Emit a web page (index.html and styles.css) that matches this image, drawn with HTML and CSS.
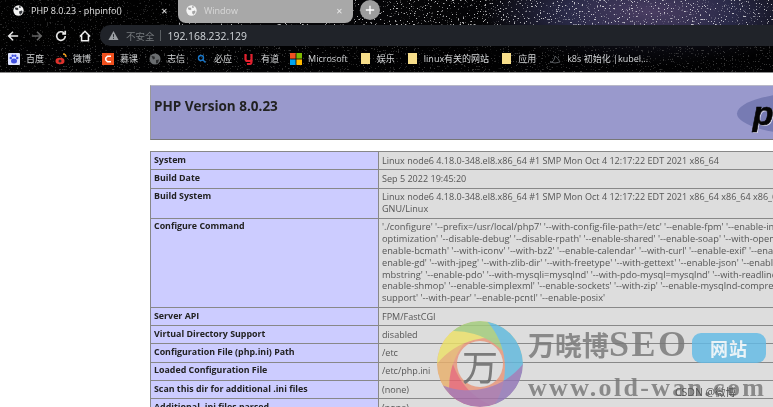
FILE: index.html
```html
<!DOCTYPE html>
<html lang="zh">
<head>
<meta charset="utf-8">
<title>PHP 8.0.23 - phpinfo()</title>
<link rel="stylesheet" href="styles.css">
</head>
<body>
<header class="chrome">
  <svg class="stars" width="773" height="72" aria-hidden="true">
    <defs>
      <filter id="starfield" x="0" y="0" width="100%" height="100%">
        <feTurbulence type="fractalNoise" baseFrequency="0.62" numOctaves="2" seed="11"/>
        <feColorMatrix type="matrix" values="0 0 0 0 1  0 0 0 0 1  0 0 0 0 1  11 0 0 0 -7.100"/>
      </filter>
    </defs>
    <rect width="773" height="72" filter="url(#starfield)"/>
  </svg>
  <div class="tabs">
    <div class="tab tab-active">
      <svg class="globe" viewBox="0 0 16 16"><circle cx="8" cy="8" r="7.5" fill="#f4f4f4"/><path d="M3 3.5l4 .5 1 2-2 1.5L3 6zM9 9l4-1 1 2-3 4-2-2zM9 1.5l3 1-1.5 2-2-1z" fill="#33363a"/></svg>
      <span class="tab-title">PHP 8.0.23 - phpinfo()</span>
      <span class="tab-x">✕</span>
    </div>
    <div class="tab tab-inactive">
      <svg class="globe" viewBox="0 0 16 16"><circle cx="8" cy="8" r="7.5" fill="#f4f4f4"/><path d="M3 3.5l4 .5 1 2-2 1.5L3 6zM9 9l4-1 1 2-3 4-2-2zM9 1.5l3 1-1.5 2-2-1z" fill="#a4a4a4"/></svg>
      <span class="tab-title">Window</span>
      <span class="tab-x">✕</span>
    </div>
    <div class="newtab"><svg viewBox="0 0 12 12"><path d="M6 1v10M1 6h10" stroke="#fff" stroke-width="1.6"/></svg></div>
  </div>
  <div class="toolbar">
    <svg class="nav" viewBox="0 0 14 14"><path d="M13 7H2M7 2L2 7l5 5" fill="none" stroke="#e8e8e8" stroke-width="1.8"/></svg>
    <svg class="nav" viewBox="0 0 14 14"><path d="M1 7h11M7 2l5 5-5 5" fill="none" stroke="#666" stroke-width="1.8"/></svg>
    <svg class="nav" viewBox="0 0 14 14"><path d="M12 7a5 5 0 1 1-1.500-3.500M12 1v3.500H8.500" fill="none" stroke="#e8e8e8" stroke-width="1.900"/></svg>
    <svg class="nav" viewBox="0 0 14 14"><path d="M1 7.500l6-6 6 6M3 6v6.500h8V6" fill="none" stroke="#eee" stroke-width="1.800"/></svg>
    <div class="omnibox">
      <svg class="warn" viewBox="0 0 12 12"><path d="M6 1l5.500 10H.5z" fill="#9a9ea2"/><path d="M6 4.500v3M6 8.500v1.200" stroke="#202428"/></svg>
      <span class="insecure">不安全</span>
      <span class="sep"></span>
      <span class="url">192.168.232.129</span>
    </div>
  </div>
  <nav class="bookmarks">
    <a class="bm"><svg viewBox="0 0 12 12"><rect width="12" height="12" rx="1" fill="#dfe4ff"/><ellipse cx="6" cy="8" rx="3" ry="2.500" fill="#4050e0"/><circle cx="2.800" cy="5" r="1.300" fill="#4050e0"/><circle cx="9.200" cy="5" r="1.300" fill="#4050e0"/><circle cx="4.700" cy="2.800" r="1.200" fill="#4050e0"/><circle cx="7.300" cy="2.800" r="1.200" fill="#4050e0"/></svg>百度</a>
    <a class="bm"><svg viewBox="0 0 12 12"><ellipse cx="5" cy="8" rx="4.500" ry="3.200" fill="#e0322c"/><circle cx="5" cy="8" r="1.500" fill="#222"/><path d="M8 1a3 3 0 0 1 3 3" fill="none" stroke="#f2a020" stroke-width="1.300"/></svg>微博</a>
    <a class="bm"><svg viewBox="0 0 12 12"><rect width="12" height="12" fill="#f0501e"/><path d="M9 3.200H5.500L3.800 5v2l1.700 1.800H9" fill="none" stroke="#fff" stroke-width="1.500"/></svg>慕课</a>
    <a class="bm"><svg viewBox="0 0 12 12"><circle cx="6" cy="6" r="5.500" fill="#6a6d70"/><path d="M2.500 3l3 .5.500 2-2 1zM7 7l3-.5-1 3.500-2 .5z" fill="#2a2b2d"/></svg>志信</a>
    <a class="bm"><svg viewBox="0 0 12 12"><circle cx="5" cy="5" r="2.500" fill="none" stroke="#1976c8" stroke-width="1.400"/><path d="M7 7L9.500 9.500" stroke="#1976c8" stroke-width="1.400"/></svg>必应</a>
    <a class="bm"><svg viewBox="0 0 12 12"><path d="M2.500 1v5q0 2 2 2h4V1M8.500 1v8q0 2-2 2H4" fill="none" stroke="#e3202e" stroke-width="2.200"/></svg>有道</a>
    <a class="bm bm-ms"><svg viewBox="0 0 12 12"><rect width="5.600" height="5.600" fill="#f25022"/><rect x="6.400" width="5.600" height="5.600" fill="#7fba00"/><rect y="6.400" width="5.600" height="5.600" fill="#00a4ef"/><rect x="6.400" y="6.400" width="5.600" height="5.600" fill="#ffb900"/></svg>Microsoft</a>
    <a class="bm bm-folder"><svg viewBox="0 0 9 11"><rect width="9" height="11" fill="#f7de8a"/></svg>娱乐</a>
    <a class="bm bm-folder"><svg viewBox="0 0 9 11"><rect width="9" height="11" fill="#f7de8a"/></svg>linux有关的网站</a>
    <a class="bm bm-folder"><svg viewBox="0 0 9 11"><rect width="9" height="11" fill="#f7de8a"/></svg>应用</a>
    <a class="bm"><svg viewBox="0 0 12 12"><path d="M1 9q4 1 5-6 3 2 5 6-5 2-10 0z" fill="none" stroke="#55585c"/></svg>k8s 初始化 |kubel...</a>
  </nav>
</header>
<main class="page">
  <div class="phpinfo">
    <div class="hero">
      <h1 class="hero-title">PHP Version 8.0.23</h1>
      <div class="php-logo"><span class="php-logo-text">php</span></div>
    </div>
    <table class="info">
      <tr><td class="k">System</td><td class="v">Linux node6 4.18.0-348.el8.x86_64 #1 SMP Mon Oct 4 12:17:22 EDT 2021 x86_64</td></tr>
      <tr><td class="k">Build Date</td><td class="v">Sep 5 2022 19:45:20</td></tr>
      <tr><td class="k">Build System</td><td class="v">Linux node6 4.18.0-348.el8.x86_64 #1 SMP Mon Oct 4 12:17:22 EDT 2021 x86_64 x86_64 x86_64<br>GNU/Linux</td></tr>
      <tr><td class="k">Configure Command</td><td class="v v-cmd">'./configure' '--prefix=/usr/local/php7' '--with-config-file-path=/etc' '--enable-fpm' '--enable-inline-<br>optimization' '--disable-debug' '--disable-rpath' '--enable-shared' '--enable-soap' '--with-openssl' '--<br>enable-bcmath' '--with-iconv' '--with-bz2' '--enable-calendar' '--with-curl' '--enable-exif' '--enable-ftp' '--<br>enable-gd' '--with-jpeg' '--with-zlib-dir' '--with-freetype' '--with-gettext' '--enable-json' '--enable-<br>mbstring' '--enable-pdo' '--with-mysqli=mysqlnd' '--with-pdo-mysql=mysqlnd' '--with-readline' '--<br>enable-shmop' '--enable-simplexml' '--enable-sockets' '--with-zip' '--enable-mysqlnd-compression-<br>support' '--with-pear' '--enable-pcntl' '--enable-posix'</td></tr>
      <tr><td class="k">Server API</td><td class="v">FPM/FastCGI</td></tr>
      <tr><td class="k">Virtual Directory Support</td><td class="v">disabled</td></tr>
      <tr><td class="k">Configuration File (php.ini) Path</td><td class="v">/etc</td></tr>
      <tr><td class="k">Loaded Configuration File</td><td class="v">/etc/php.ini</td></tr>
      <tr><td class="k">Scan this dir for additional .ini files</td><td class="v">(none)</td></tr>
      <tr><td class="k">Additional .ini files parsed</td><td class="v">(none)</td></tr>
    </table>
  </div>
</main>
<aside class="watermark">
  <svg class="wm-logo" viewBox="0 0 86 86">
    <defs>
      <mask id="ring"><circle cx="43" cy="43" r="43" fill="#fff"/><circle cx="43" cy="43" r="23" fill="#000"/></mask>
      <path id="blade" d="M43 0A43 43 0 0 1 64.500 80.200A70 70 0 0 0 43 0z"/>
    </defs>
    <g mask="url(#ring)">
      <circle cx="43" cy="43" r="43" fill="#e8967a"/>
      <use href="#blade" transform="rotate(165 43 43)" fill="#e8606e" opacity=".95"/>
      <use href="#blade" transform="rotate(225 43 43)" fill="#e9b46c" opacity=".95"/>
      <use href="#blade" transform="rotate(-90 43 43)" fill="#ece468" opacity=".95"/>
      <use href="#blade" transform="rotate(-40 43 43)" fill="#9fcb7c" opacity=".95"/>
      <use href="#blade" transform="rotate(10 43 43)" fill="#5db8e4" opacity=".95"/>
      <use href="#blade" transform="rotate(90 43 43)" fill="#9a6bb0" opacity=".85"/>
    </g>
  </svg>
  <span class="wm-wan">万</span>
  <span class="wm-name">万晓博<span class="wm-seo">SEO</span></span>
  <span class="wm-badge">网站</span>
  <span class="wm-url">www.old-wan.com</span>
  <span class="wm-csdn">CSDN @微博</span>
</aside>
</body>
</html>
```
FILE: styles.css
```css
* { box-sizing: border-box; }
html, body { margin: 0; height: 100%; }
body {
  width: 773px;
  height: 407px;
  overflow: hidden;
  position: relative;
  background: #fff;
  font-family: "Open Sans", "Noto Sans CJK SC", sans-serif;
  filter: blur(0.35px);
}
.chrome {
  position: relative;
  height: 73px;
  color: #d4d6d8;
  border-bottom: 1px solid #8a8a8a;
  background-color: #050507;
  background-image: radial-gradient(ellipse 170px 55px at 650px 12px, #4a3d62 0%, #2a2a48 50%, transparent 100%);
}
.stars { position: absolute; left: 0; top: 0; opacity: .7; }
.tabs, .toolbar, .bookmarks { position: relative; }
.tabs { height: 25px; display: flex; align-items: flex-start; }
.tab {
  width: 178px;
  height: 23px;
  display: flex;
  align-items: center;
  gap: 7px;
  padding: 0 10px 2px 13px;
  font-size: 9px;
  color: #e4e4e4;
}
.tab-active { height: 25px; background: #000000c4; padding-bottom: 4px; }
.tab-inactive {
  background: #a8a8a8;
  border-radius: 0 0 8px 8px;
  color: #d8d8d8;
  width: 175px;
  padding-left: 8px;
}
.globe { width: 11px; height: 11px; flex: none; }
.tab-title { flex: 1; white-space: nowrap; }
.tab-x { font-size: 8px; color: #e8e8e8; }
.newtab {
  width: 20px;
  height: 20px;
  margin: 0 0 0 7px;
  border-radius: 50%;
  background: #9d9d9d;
  display: flex;
  align-items: center;
  justify-content: center;
}
.newtab svg { width: 10px; height: 10px; }
.toolbar { height: 21px; display: flex; align-items: center; padding-left: 7px; background: #000000c4; }
.nav { width: 12px; height: 12px; margin-right: 12px; flex: none; }
.nav:nth-child(4) { margin-right: 9px; }
.omnibox {
  flex: 1;
  height: 21px;
  background: #202329;
  border-radius: 10px 0 0 10px;
  display: flex;
  align-items: center;
  padding-left: 8px;
}
.warn { width: 11px; height: 11px; }
.insecure { font-size: 9.5px; color: #75797d; margin-left: 7px; }
.sep { width: 1px; height: 11px; background: #5a5e62; margin: 0 7px 0 5px; }
.url { font-size: 10.400px; color: #d2d6da; }
.bookmarks { height: 26px; display: flex; align-items: center; padding: 0 0 1px 8px; font-size: 9px; background: #000000b0; }
.bm { display: flex; align-items: center; gap: 6px; margin-right: 11px; white-space: nowrap; }
.bm svg { width: 12px; height: 12px; flex: none; }
.bm-ms { margin-right: 13px; }
.bm-folder { gap: 7px; margin-right: 13px; }
.bm-folder svg { width: 9px; height: 11px; }
.page { padding: 12px 0 0 150px; }
.phpinfo { width: 760px; }
.hero {
  height: 55px;
  background: #9999cc;
  border: 1px solid #999;
  border-top-color: #b8b8c8;
  border-bottom-color: #777;
  display: flex;
  justify-content: space-between;
  align-items: flex-start;
  padding: 5px 0 0 3px;
  overflow: hidden;
}
.hero-title { margin: 7px 0 0; font-size: 13.500px; line-height: 16px; font-weight: 700; color: #222; }
.php-logo {
  width: 172px;
  height: 45px;
  border-radius: 50%;
  background: #777bb3;
  display: flex;
  align-items: center;
  justify-content: center;
}
.php-logo-text {
  font: italic 700 34px/34px "Liberation Sans", sans-serif;
  color: #050505;
  -webkit-text-stroke: .6px #050505;
  text-shadow: 1px 1px 0 #d8d8ec;
  margin: 0 78px 2px 0;
}
.info {
  width: 100%;
  margin-top: 11px;
  border-collapse: collapse;
  table-layout: fixed;
  font-size: 9.050px;
  line-height: 11.800px;
  color: #222;
}
.info td { border: 1px solid #888; padding: 2.750px 3px; vertical-align: top; white-space: nowrap; }
.k { width: 228px; background: #ccccff; font-size: 8.850px; font-weight: 700; }
.v { background: #ddd; color: #555; }
.v-cmd { font-size: 9.250px; }
.watermark { position: absolute; left: 437px; top: 321px; width: 336px; height: 86px; opacity: .82; }
.wm-logo { position: absolute; left: 0; top: 0; width: 86px; height: 86px; }
.wm-wan { position: absolute; left: 25px; top: 23px; font: 36px/42px "Noto Sans CJK SC", sans-serif; color: #666; }
.wm-name { position: absolute; left: 91px; top: 5px; font: 700 27px/36px "Liberation Serif", "Noto Sans CJK SC", serif; color: #777; white-space: nowrap; }
.wm-seo { font-size: 36px; line-height: 36px; letter-spacing: 2.500px; }
.wm-badge { position: absolute; left: 255px; top: 12px; width: 74px; height: 30px; border-radius: 9px; background: #63bbe6; color: #eef8fd; font: 700 18px/30px "Noto Sans CJK SC", sans-serif; text-align: center; letter-spacing: 1px; }
.wm-url { position: absolute; left: 91px; top: 52px; font: 700 26px/30px "Liberation Serif", serif; color: #777; letter-spacing: 2.300px; white-space: nowrap; }
.wm-csdn { position: absolute; left: 238px; top: 64px; font: 10.500px/14px "Open Sans", "Noto Sans CJK SC", sans-serif; color: #333; white-space: nowrap; }
```
